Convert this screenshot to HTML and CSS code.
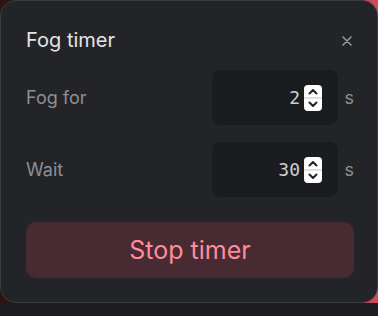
FILE: index.html
```html
<!DOCTYPE html>
<html>
<head>
<meta charset="utf-8">
<link rel="stylesheet" href="styles.css">
</head>
<body>
<div class="backdrop">
  <div class="dialog">
    <div class="header">
      <h2 class="title">Fog timer</h2>
      <button class="close" aria-label="Close">
        <svg width="10" height="10" viewBox="0 0 10 10"><path d="M1 1L9 9M9 1L1 9" stroke="#9a9ba0" stroke-width="1.5" stroke-linecap="round"/></svg>
      </button>
    </div>
    <div class="row">
      <span class="label">Fog for</span>
      <div class="field">
        <span class="value">2</span>
        <span class="spin">
          <svg width="18" height="26" viewBox="0 0 18 26"><rect x="0" y="0" width="18" height="26" rx="4" fill="#fff"/><line x1="0" y1="13" x2="18" y2="13" stroke="#d6d6d6" stroke-width="1.5"/><path d="M5.5 8.5L9 5L12.5 8.5" fill="none" stroke="#222" stroke-width="2" stroke-linecap="round" stroke-linejoin="round"/><path d="M5.5 17.5L9 21L12.5 17.5" fill="none" stroke="#222" stroke-width="2" stroke-linecap="round" stroke-linejoin="round"/></svg>
        </span>
      </div>
      <span class="unit">s</span>
    </div>
    <div class="row">
      <span class="label">Wait</span>
      <div class="field">
        <span class="value">30</span>
        <span class="spin">
          <svg width="18" height="26" viewBox="0 0 18 26"><rect x="0" y="0" width="18" height="26" rx="4" fill="#fff"/><line x1="0" y1="13" x2="18" y2="13" stroke="#d6d6d6" stroke-width="1.5"/><path d="M5.5 8.5L9 5L12.5 8.5" fill="none" stroke="#222" stroke-width="2" stroke-linecap="round" stroke-linejoin="round"/><path d="M5.5 17.5L9 21L12.5 17.5" fill="none" stroke="#222" stroke-width="2" stroke-linecap="round" stroke-linejoin="round"/></svg>
        </span>
      </div>
      <span class="unit">s</span>
    </div>
    <button class="stop">Stop timer</button>
  </div>
</div>
</body>
</html>
```

FILE: styles.css
```css
html, body {
  margin: 0;
  padding: 0;
}
body {
  width: 378px;
  height: 316px;
  overflow: hidden;
  background: #1c1d20;
  font-family: Inter, "Noto Sans", sans-serif;
}
.backdrop {
  background: linear-gradient(90deg, #2a1417 0%, #5a2028 50%, #d04a5e 100%);
  height: 303px;
}
.dialog {
  box-sizing: border-box;
  width: 378px;
  height: 303px;
  background: #232428;
  border: 1px solid #3b3c40;
  border-radius: 16px;
  padding: 0 23px 0 25px;
  display: flex;
  flex-direction: column;
}
.header {
  display: flex;
  align-items: center;
  justify-content: space-between;
  height: 38px;
  margin-top: 20px;
}
.title {
  margin: 0;
  font-size: 20px;
  font-weight: 400;
  color: #e4e4e7;
}
.close {
  background: none;
  border: 0;
  padding: 0;
  margin-right: 2px;
  display: flex;
  width: 10px;
  height: 10px;
  margin-top: 2px;
}
.row {
  display: flex;
  align-items: center;
  margin-top: 11px;
  height: 55px;
}
.row + .row {
  margin-top: 17px;
}
.label {
  flex: 1;
  font-size: 18px;
  color: #8e8f95;
}
.field {
  box-sizing: border-box;
  width: 126px;
  height: 55px;
  background: #1b1c1f;
  border-radius: 8px;
  display: flex;
  align-items: center;
  justify-content: flex-end;
  padding-right: 16px;
  gap: 4px;
}
.value {
  font-family: "DejaVu Sans Mono", monospace;
  font-size: 18px;
  color: #cfcfd2;
}
.spin {
  display: flex;
}
.unit {
  width: 16px;
  text-align: right;
  font-size: 18px;
  color: #8e8f95;
}
.stop {
  margin-top: 25px;
  height: 56px;
  border: 0;
  border-radius: 10px;
  background: #472a32;
  color: #ff8b9b;
  font-family: Inter, "Noto Sans", sans-serif;
  font-size: 25px;
  font-weight: 400;
}
```
